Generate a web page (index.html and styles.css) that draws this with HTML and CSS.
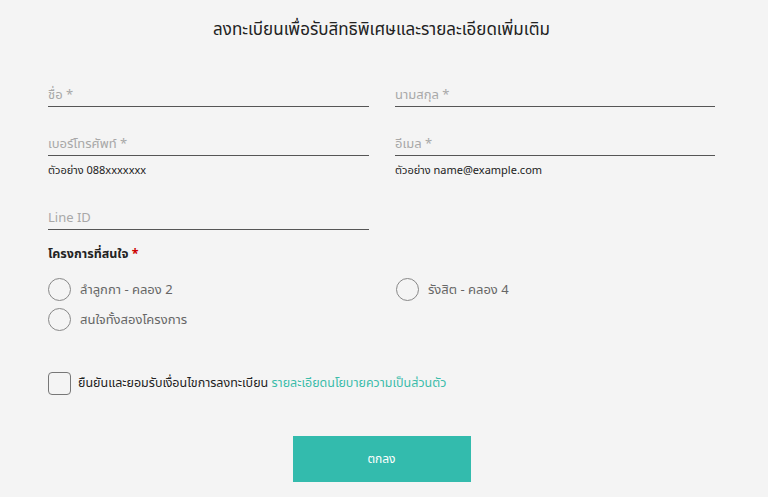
FILE: index.html
```html
<!DOCTYPE html>
<html lang="th">
  <head>
    <meta charset="UTF-8" />
    <meta name="viewport" content="width=device-width, initial-scale=1.0" />
    <title>ลงทะเบียน</title>
    <link rel="stylesheet" href="styles.css">
  </head>
  <body>
    <form class="register">
      <h2 class="register-title">ลงทะเบียนเพื่อรับสิทธิพิเศษและรายละเอียดเพิ่มเติม</h2>

      <div class="fields">
        <div class="field">
          <input type="text" placeholder="ชื่อ *" />
        </div>
        <div class="field">
          <input type="text" placeholder="นามสกุล *" />
        </div>
        <div class="field">
          <input type="tel" placeholder="เบอร์โทรศัพท์ *" />
          <p class="hint">ตัวอย่าง 088xxxxxxx</p>
        </div>
        <div class="field">
          <input type="email" placeholder="อีเมล *" />
          <p class="hint">ตัวอย่าง name@example.com</p>
        </div>
        <div class="field">
          <input type="text" placeholder="Line ID" />
        </div>
      </div>

      <h3 class="group-title">โครงการที่สนใจ <span class="req">*</span></h3>
      <div class="options">
        <label class="option"><span class="circle"></span>ลำลูกกา - คลอง 2</label>
        <label class="option"><span class="circle"></span>รังสิต - คลอง 4</label>
        <label class="option"><span class="circle"></span>สนใจทั้งสองโครงการ</label>
      </div>

      <label class="consent">
        <span class="box"></span>
        <span>ยืนยันและยอมรับเงื่อนไขการลงทะเบียน <a href="#">รายละเอียดนโยบายความเป็นส่วนตัว</a></span>
      </label>

      <div class="actions">
        <button type="button">ตกลง</button>
      </div>
    </form>
  </body>
</html>
```

FILE: styles.css
```css
html,
body {
  margin: 0;
  padding: 0;
  background: #f4f4f4;
  font-family: "Noto Sans", "Noto Sans Thai", sans-serif;
  color: #222;
}
.register {
  width: 667px;
  margin: 0 0 0 48px;
  padding-top: 16px;
}
.register-title {
  margin: 0 0 41px;
  text-align: center;
  font-size: 17px;
  font-weight: 400;
  color: #222;
  line-height: 26px;
}
.fields {
  display: grid;
  grid-template-columns: 321px 320px;
  column-gap: 26px;
}
.field {
  height: 49px;
}
.field:nth-child(3),
.field:nth-child(4) {
  height: 74px;
}
.field input {
  display: block;
  width: 100%;
  box-sizing: border-box;
  border: 0;
  border-bottom: 1px solid #555;
  background: transparent;
  padding: 0 0 2px;
  height: 24px;
  font-family: inherit;
  font-size: 13px;
  color: #222;
  outline: none;
}
.field input::placeholder {
  color: #a8a8a8;
}
.hint {
  margin: 6px 0 0;
  font-size: 11px;
  color: #222;
}
.group-title {
  margin: -11px 0 0;
  font-size: 12.5px;
  font-weight: 700;
  line-height: 20px;
}
.req {
  color: #c00;
}
.options {
  display: grid;
  grid-template-columns: 348px 1fr;
  row-gap: 7px;
  margin-top: 14px;
}
.option {
  display: flex;
  align-items: center;
  gap: 9px;
  font-size: 13px;
  color: #666;
}
.circle {
  width: 21px;
  height: 21px;
  border: 1px solid #888;
  border-radius: 50%;
}
.consent {
  display: flex;
  align-items: center;
  gap: 7px;
  margin-top: 41px;
  font-size: 12.5px;
  color: #222;
}
.box {
  width: 21px;
  height: 21px;
  border: 1px solid #777;
  border-radius: 4px;
}
.consent a {
  color: #3bbcaa;
  text-decoration: none;
}
.actions {
  display: flex;
  justify-content: center;
  margin-top: 41px;
}
.actions button {
  width: 178px;
  height: 46px;
  border: 0;
  background: #33bbad;
  color: #fff;
  font-family: inherit;
  font-size: 12px;
  cursor: pointer;
}
```
